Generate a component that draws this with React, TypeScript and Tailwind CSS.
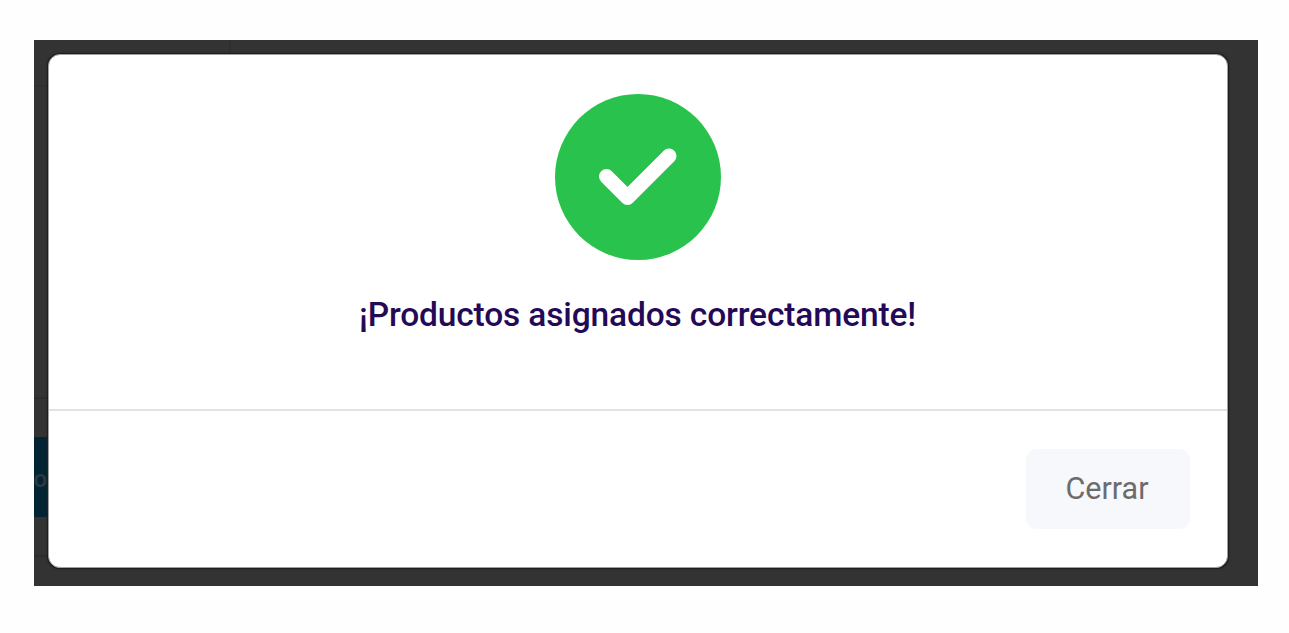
import React from 'react';

type IProps = {
  message: string;
};

const CheckIcon: React.FC = () => (
  <svg viewBox="0 0 166 166" className="w-[166px] h-[166px] shrink-0" fill="none">
    <circle cx="83" cy="83" r="83" fill="#29c24d" />
    <path d="M51.5 82.5L72.5 103.5L114 62" stroke="#fff" strokeWidth="15" strokeLinecap="round" strokeLinejoin="round" />
  </svg>
);

// Dimmed page behind the dialog
const Backdrop: React.FC = () => (
  <div className="absolute inset-0">
    <div className="absolute left-[195px] top-0 w-0.5 h-4 bg-[#2d2f30]"></div>
    <div className="absolute left-0 top-[45px] w-4 h-0.5 bg-[#2a3033]"></div>
    <div className="absolute left-0 top-[357px] w-4 h-0.5 bg-[#292d2f]"></div>
    <div className="absolute left-0 top-[397px] w-4 h-20 bg-[#032433] flex items-center justify-end">
      <span className="text-[24px] leading-9 font-medium text-[#2c3a40] mr-[3px] mt-1">o</span>
    </div>
    <div className="absolute left-0 top-[515px] w-4 h-0.5 bg-[#292d2f]"></div>
  </div>
);

const Modal: React.FC<IProps> = ({ message }) => {
  return (
    <div
      role="dialog"
      className="relative w-[1180px] h-[514px] flex flex-col bg-white border border-[#a0a0a0] rounded-xl shadow-[0_0_0_1px_#1e1e1e,0_0_2px_1px_#222222]"
    >
      <div className="h-[356px] flex flex-col items-center pt-[38.5px] pr-px border-b-2 border-[#e2e2e2]">
        <CheckIcon />
        <h1 className="text-[33.5px] leading-10 font-medium tracking-[-0.15px] text-[#240a56] mt-[35px] whitespace-nowrap">
          {message}
        </h1>
      </div>
      <div className="flex justify-end pt-[38px] pr-[37px]">
        <button type="button" className="w-[164px] h-20 rounded-[11px] bg-[#f7f8fb] text-[30.5px] text-[#6c6c6c] pr-0.5">
          Cerrar
        </button>
      </div>
    </div>
  );
};

const App: React.FC = () => {
  return (
    <main className="w-full h-[633px] bg-[#fefefe] pt-10 pl-[34px] font-['Roboto',sans-serif]">
      <div className="relative w-[1224px] h-[546px] bg-[#333333] pt-3.5 pl-3.5">
        <Backdrop />
        <Modal message="¡Productos asignados correctamente!" />
      </div>
    </main>
  );
};

export default App;
